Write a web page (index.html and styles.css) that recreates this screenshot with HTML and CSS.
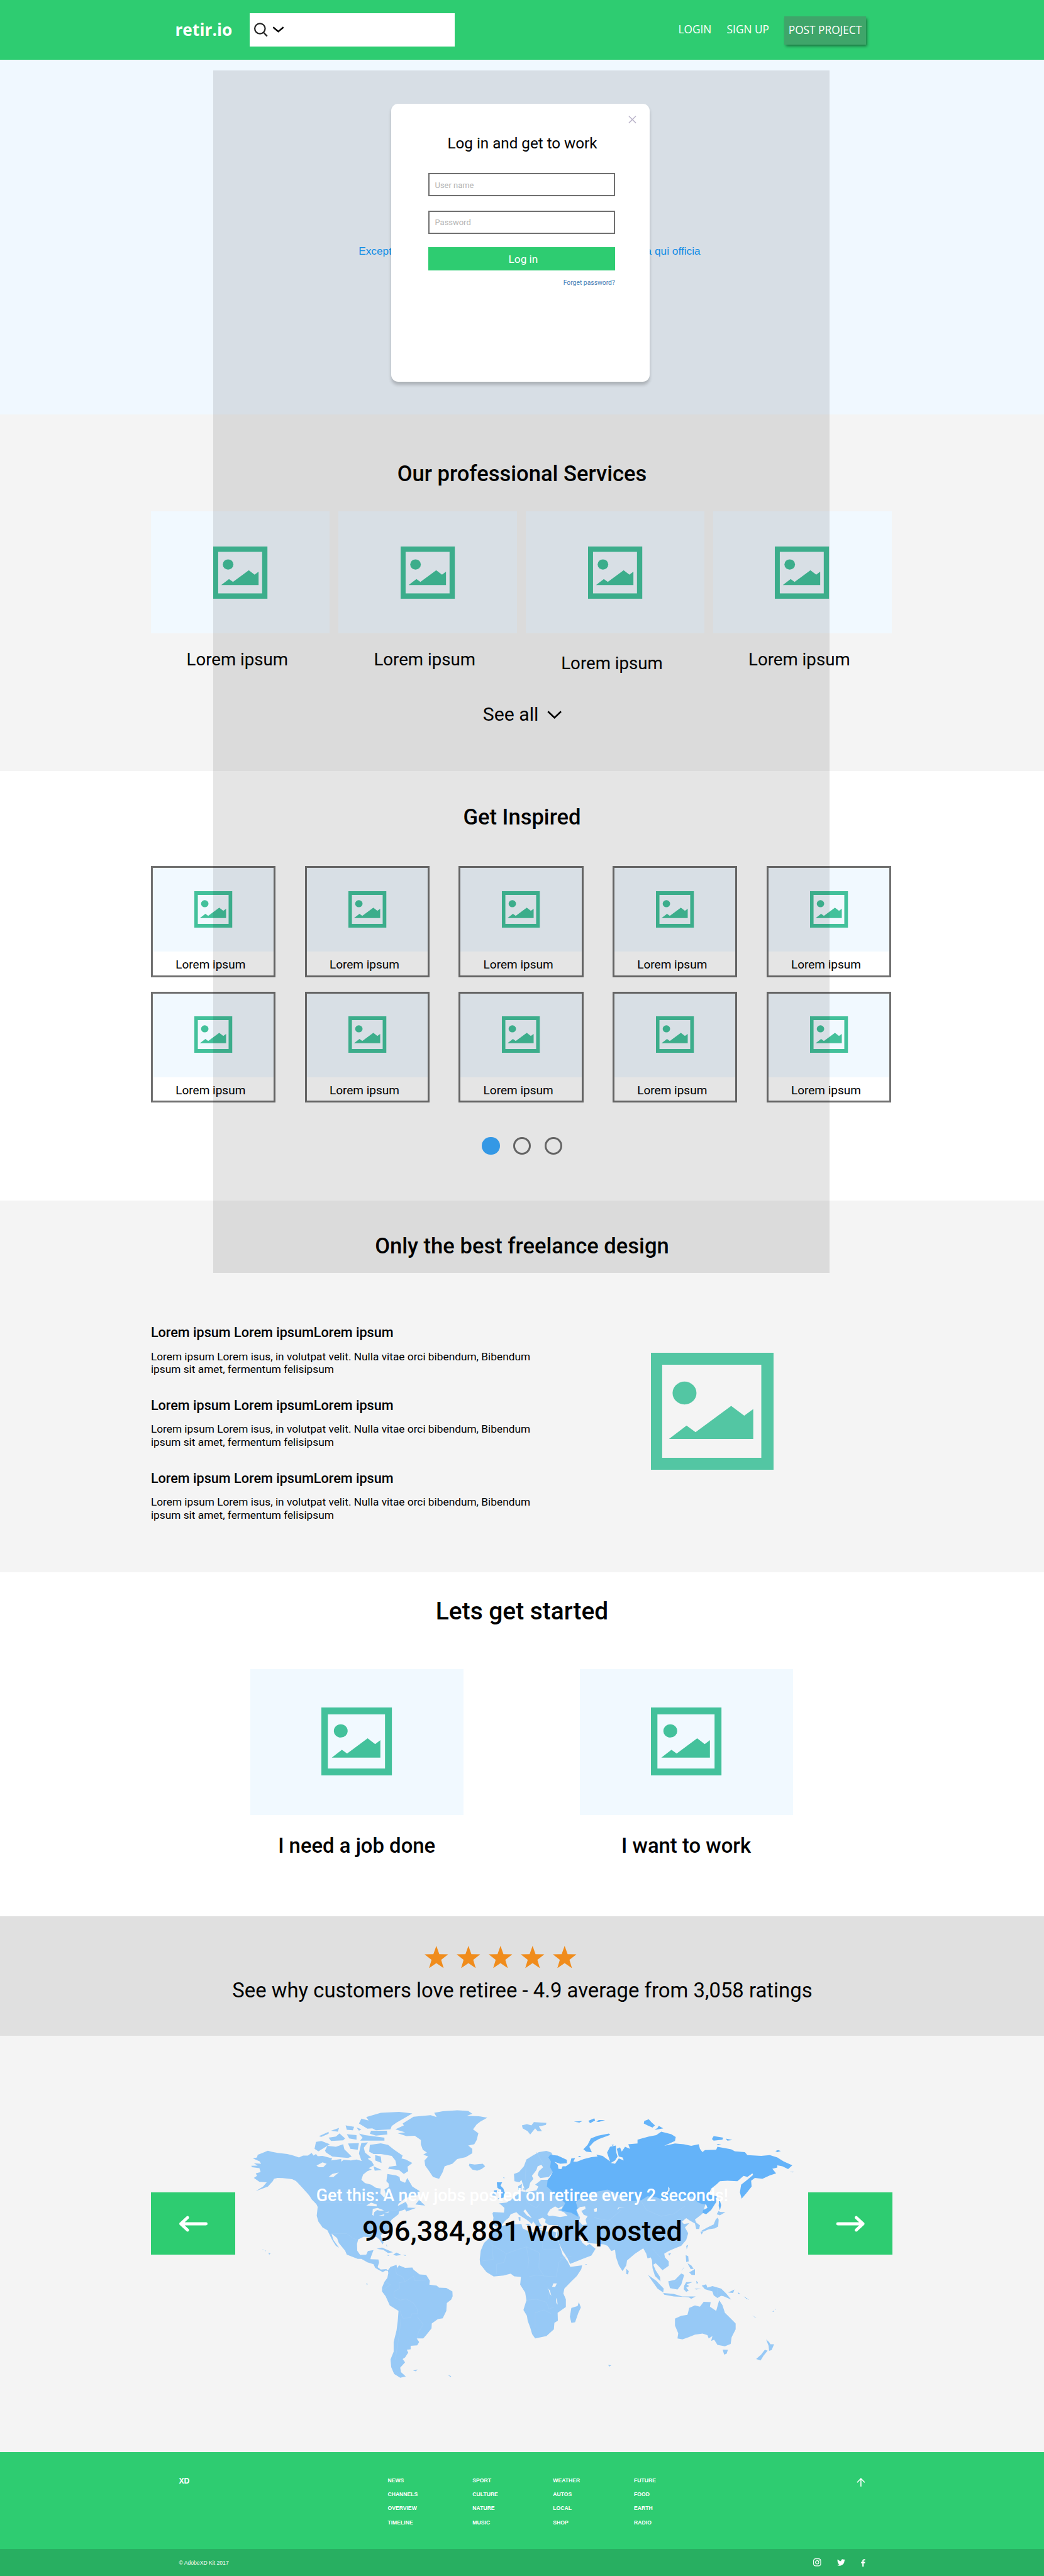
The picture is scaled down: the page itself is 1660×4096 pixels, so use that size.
FILE: index.html
```
<!DOCTYPE html>
<html lang="en">
<head>
<meta charset="utf-8">
<title>retir.io</title>
<link rel="stylesheet" href="styles.css">
</head>
<body>
<svg class="sprite" aria-hidden="true">
  <symbol id="picture" viewBox="0 0 225.5 215" preserveAspectRatio="none">
    <path fill-rule="evenodd" d="M0 0H225.500V215H0ZM20.700 22.100V193.200H203V22.100Z"/>
    <ellipse cx="61.800" cy="74" rx="22" ry="21"/>
    <path d="M33.200 158.500 65.500 134 82.100 145.900 147.600 97.600 171.600 115.800 188.200 103.600V158.500Z"/>
  </symbol>
  <symbol id="star" viewBox="0 0 43.500 41">
    <path d="M21.750 0 27.200 15.300 43.500 15.700 30.600 25.600 35.200 41 21.750 31.800 8.300 41 12.900 25.600 0 15.700 16.300 15.300Z"/>
  </symbol>
</svg>

<header class="topbar">
  <a class="logo">retir.io</a>
  <div class="search">
    <svg class="search-icon" viewBox="0 0 26 26"><circle cx="10.800" cy="11" r="9.500"/><path d="M17.300 18 24 25"/></svg>
    <svg class="search-caret" viewBox="0 0 22 12"><path d="M1.500 1.500 11 9.500 20.500 1.500"/></svg>
  </div>
  <nav class="topnav">
    <a>LOGIN</a>
    <a>SIGN UP</a>
    <a class="post">POST PROJECT</a>
  </nav>
</header>

<section class="hero">
  <p class="hero-text">Excepteur sint occaecat cupidatat non proident, sunt in culpa qui officia</p>
</section>

<section class="services">
  <h2 class="title">Our professional Services</h2>
  <div class="service-grid">
    <div class="service"><div class="service-pic"><svg class="pic"><use href="#picture"/></svg></div><p>Lorem ipsum</p></div>
    <div class="service"><div class="service-pic"><svg class="pic"><use href="#picture"/></svg></div><p>Lorem ipsum</p></div>
    <div class="service service-low"><div class="service-pic"><svg class="pic"><use href="#picture"/></svg></div><p>Lorem ipsum</p></div>
    <div class="service"><div class="service-pic"><svg class="pic"><use href="#picture"/></svg></div><p>Lorem ipsum</p></div>
  </div>
  <a class="see-all">See all <svg viewBox="0 0 27 15"><path d="M1.500 1.500 13.500 13 25.500 1.500"/></svg></a>
</section>

<section class="inspired">
  <h2 class="title">Get Inspired</h2>
  <div class="work-grid">
    <div class="work"><div class="work-pic"><svg class="pic"><use href="#picture"/></svg></div><p>Lorem ipsum</p></div>
    <div class="work"><div class="work-pic"><svg class="pic"><use href="#picture"/></svg></div><p>Lorem ipsum</p></div>
    <div class="work"><div class="work-pic"><svg class="pic"><use href="#picture"/></svg></div><p>Lorem ipsum</p></div>
    <div class="work"><div class="work-pic"><svg class="pic"><use href="#picture"/></svg></div><p>Lorem ipsum</p></div>
    <div class="work"><div class="work-pic"><svg class="pic"><use href="#picture"/></svg></div><p>Lorem ipsum</p></div>
    <div class="work"><div class="work-pic"><svg class="pic"><use href="#picture"/></svg></div><p>Lorem ipsum</p></div>
    <div class="work"><div class="work-pic"><svg class="pic"><use href="#picture"/></svg></div><p>Lorem ipsum</p></div>
    <div class="work"><div class="work-pic"><svg class="pic"><use href="#picture"/></svg></div><p>Lorem ipsum</p></div>
    <div class="work"><div class="work-pic"><svg class="pic"><use href="#picture"/></svg></div><p>Lorem ipsum</p></div>
    <div class="work"><div class="work-pic"><svg class="pic"><use href="#picture"/></svg></div><p>Lorem ipsum</p></div>
  </div>
  <div class="pager"><span class="dot dot-on"></span><span class="dot"></span><span class="dot"></span></div>
</section>

<section class="best">
  <h2 class="title">Only the best freelance design</h2>
  <div class="best-body">
    <div class="points">
      <article><h3>Lorem ipsum Lorem ipsumLorem ipsum</h3><p>Lorem ipsum Lorem isus, in volutpat velit. Nulla vitae orci bibendum, Bibendum<br>ipsum sit amet, fermentum felisipsum</p></article>
      <article><h3>Lorem ipsum Lorem ipsumLorem ipsum</h3><p>Lorem ipsum Lorem isus, in volutpat velit. Nulla vitae orci bibendum, Bibendum<br>ipsum sit amet, fermentum felisipsum</p></article>
      <article><h3>Lorem ipsum Lorem ipsumLorem ipsum</h3><p>Lorem ipsum Lorem isus, in volutpat velit. Nulla vitae orci bibendum, Bibendum<br>ipsum sit amet, fermentum felisipsum</p></article>
    </div>
    <svg class="pic best-pic"><use href="#picture"/></svg>
  </div>
</section>

<section class="started">
  <h2 class="title title-lg">Lets get started</h2>
  <div class="start-grid">
    <div class="start"><div class="start-pic"><svg class="pic"><use href="#picture"/></svg></div><p>I need a job done</p></div>
    <div class="start"><div class="start-pic"><svg class="pic"><use href="#picture"/></svg></div><p>I want to work</p></div>
  </div>
</section>

<section class="ratings">
  <div class="stars">
    <svg><use href="#star"/></svg><svg><use href="#star"/></svg><svg><use href="#star"/></svg><svg><use href="#star"/></svg><svg><use href="#star"/></svg>
  </div>
  <p>See why customers love retiree - 4.9 average from 3,058 ratings</p>
</section>

<section class="world">
  <a class="arrow-btn"><svg viewBox="0 0 54 30"><path d="M50.500 15H4M16.500 3.500 4 15 16.500 26.500"/></svg></a>
  <div class="map-stage">
    <svg class="map" viewBox="432 3744 1054 766">
      <g transform="translate(260 3850) scale(.44643 .35714)">
        <g class="land">
          <path d="M451 373 478 372 462 360 492 362 486 350 458 335 475 330 478 316 498 306 520 295 533 300 560 306 600 312 625 320 648 330 665 320 685 320 700 306 708 320 718 312 725 323 745 322 785 335 780 345 822 338 822 352 832 342 862 345 885 340 905 348 915 335 925 322 935 340 948 350 957 370 935 385 948 392 930 400 912 418 905 445 920 462 945 470 965 486 985 490 983 515 1000 538 1005 515 1000 495 1018 482 1018 465 1008 452 1012 415 1048 422 1062 430 1065 450 1085 460 1094 435 1115 480 1145 503 1135 525 1110 530 1085 540 1058 568 1055 580 1088 558 1095 575 1095 588 1130 590 1090 608 1085 597 1060 608 1058 622 1040 640 1030 650 1020 670 1022 700 1000 715 985 730 990 755 997 765 993 778 978 750 965 738 945 742 915 738 892 752 887 775 888 810 900 832 925 830 932 812 955 807 945 840 942 854 975 855 978 870 972 895 985 907 1008 905 1016 915 1005 912 993 920 975 908 962 898 955 880 930 870 905 852 890 852 845 830 838 810 812 770 805 745 782 722 790 755 813 795 800 785 785 755 765 705 745 690 728 660 721 630 725 585 720 570 700 545 688 520 668 490 650 460 620 442 580 436 560 435 545 440 540 452 520 480 470 503 500 480 515 458 485 455 462 435 475 425 470 412 490 405 485 385 455 380Z"/>
          <path d="M635 450 655 455 690 510 732 575 725 578 690 525 665 490Z"/>
          <path d="M1128 572 1145 545 1152 560 1168 578 1150 575Z"/>
          <path d="M925 122 985 100 1060 95 1115 103 1085 125 1050 150 1030 168 1025 185 965 190 950 180 930 182 895 155 905 130 935 140Z"/>
          <path d="M945 192 1010 192 1012 212 965 217 940 208ZM895 207 920 215 1000 228 1000 243 900 243 910 228ZM840 165 875 172 870 190 845 187ZM885 175 905 185 895 192ZM770 228 800 222 815 206 838 232 830 242 780 245ZM845 210 885 215 885 238 855 232ZM730 220 770 198 770 208 740 224ZM780 192 813 178 808 197Z"/>
          <path d="M718 250 740 245 775 262 745 285 728 298 712 285ZM755 295 765 270 800 275 830 262 835 288 865 325 850 332 810 328 785 325 760 305ZM850 258 895 256 890 290 860 285ZM905 255 932 252 915 280 920 305 945 330 905 345 895 310 900 280ZM962 318 985 325 988 358 962 345ZM955 375 990 395 960 398Z"/>
          <path d="M937 300 940 265 985 257 1015 265 1040 290 1075 320 1070 335 1088 340 1115 358 1095 378 1098 400 1080 415 1060 395 1015 388 1020 378 1050 372 1045 345 1030 322 985 312 955 312Z"/>
          <path d="M1045 185 1080 165 1075 155 1120 120 1190 112 1215 122 1205 100 1240 92 1300 87 1345 90 1362 105 1340 115 1390 118 1424 125 1395 145 1380 160 1365 185 1387 205 1380 240 1370 262 1345 268 1362 285 1362 308 1335 328 1300 338 1280 362 1248 375 1240 405 1225 440 1200 430 1185 402 1168 372 1165 345 1180 325 1160 315 1175 305 1158 290 1150 262 1150 240 1125 218 1090 220 1055 205 1085 200Z"/>
          <path d="M1348 372 1350 362 1372 366 1405 362 1415 375 1400 390 1382 398 1362 392Z"/>
          <path d="M968 800 990 794 1035 818 1015 822 995 805ZM1036 830 1050 820 1070 832 1048 836ZM1008 833 1020 833 1018 837ZM1076 832 1089 833 1086 837ZM522 820 531 825 525 830ZM498 802 502 804 499 806ZM508 808 513 810 510 813ZM925 977 931 982 928 988ZM1118 1428 1136 1421 1130 1431ZM1260 1449 1275 1456 1272 1460ZM1007 776 1012 788 1009 788Z"/>
          <path d="M1014 912 1025 893 1050 883 1052 900 1060 885 1085 898 1115 897 1120 908 1145 932 1172 935 1187 965 1185 985 1215 990 1225 1000 1255 1002 1280 1020 1281 1045 1275 1062 1257 1080 1255 1120 1240 1158 1220 1162 1195 1185 1194 1210 1175 1240 1160 1262 1133 1262 1143 1280 1135 1297 1108 1300 1108 1318 1092 1320 1098 1335 1085 1360 1075 1368 1085 1385 1065 1412 1068 1435 1088 1458 1065 1464 1040 1445 1028 1410 1025 1370 1038 1330 1038 1280 1050 1220 1055 1170 1058 1120 1022 1092 1005 1045 990 1020 990 1000 1000 970 1012 950 1016 925Z"/>
        </g>
        <path class="land-dark" d="M1463 458 1485 458 1478 475 1490 490 1495 510 1502 520 1495 535 1465 545 1482 525 1468 510 1475 495 1465 485ZM1450 500 1464 498 1462 510 1452 508ZM1490 432 1494 433 1492 440Z"/>
        <path class="land" d="M1450 508 1463 512 1460 525 1440 532Z"/>
        <path class="water" d="M925 578 945 562 968 572 968 582 945 580ZM952 595 972 590 998 602 985 605 970 600 958 612 955 630 950 625ZM975 630 1000 622 998 630ZM1000 612 1020 608 1015 614ZM720 372 745 355 762 362 748 380 730 380ZM770 430 785 415 812 407 790 430ZM1015 338 1028 335 1026 350 1014 348Z"/>
        <path class="border" d="M735 562H865L925 570M1018 605 1055 600 1062 580M780 722 845 722 870 745 887 755M1045 900 1050 930 1075 945 1085 970 1060 975 1062 1005 1040 1020 1040 1050 1065 1065 1090 1058 1120 1080 1135 1110 1138 1135 1112 1135 1108 1155 1075 1158 1065 1120M1068 1160 1060 1250 1045 1370M1135 1150 1160 1190 1140 1230 1135 1262M1085 970 1120 940 1125 965 1170 962M990 1015 1025 985 1003 970"/>
      </g>
      <g transform="translate(940 3850) scale(.45918 .35714)">
        <g class="land">
          <path d="M42 165 62 158 80 165 90 148 140 152 138 162 110 170 122 195 105 195 95 180 75 212 65 195 45 180Z"/>
          <path d="M10 415 30 405 50 375 60 340 85 320 110 302 140 296 160 305 170 330 160 350 158 380 165 405 150 430 115 436 105 420 110 400 127 380 120 368 105 375 100 395 82 425 88 440 75 460 70 485 55 500 45 465 40 445 32 458 12 452Z"/>
          <path d="M27 478 42 466 40 500 28 497ZM46 488 54 490 50 500Z"/>
          <path d="M-76 617-72 611-30 614-28 590-40 575-50 566-20 562-5 550 5 540 25 520 35 503 60 508 100 500 108 480 95 470 120 445 145 445 200 480 800 480 765 620 735 650 740 665 755 680 752 698 740 698 735 670 715 655 700 642 683 660 690 672 712 668 695 690 708 720 700 755 680 785 650 800 630 812 612 825 615 845 630 865 630 888 605 910 590 890 578 875 568 882 578 912 595 945 597 968 575 940 565 900 563 860 558 845 545 850 540 825 528 798 515 808 495 825 463 860 460 885 445 915 430 885 418 840 415 805 400 812 385 785 370 778 320 772 305 768 285 738 270 738 285 770 300 785 313 775 337 800 320 835 290 850 235 878 225 850 205 810 190 770 182 740 185 705 188 685 185 678 150 678 135 665 137 650 125 640 108 648 112 665 122 682 105 690 90 665 80 640 55 597 48 607 62 628 90 650 82 672 60 650 30 625 20 612-3 622-10 640-25 655-42 682-60 685-76 672-72 640Z"/>
          <path d="M28 637 36 637 36 655 30 656ZM32 618 36 618 35 630ZM55 672 73 672 70 683ZM110 695 126 697 112 699ZM160 692 172 688 166 696Z"/>
          <path d="M-60 692-52 687-20 676 15 674 40 672 45 695 60 705 90 716 100 698 140 712 165 710 180 715 176 740 190 770 205 830 225 865 236 893 283 885 280 905 262 940 240 968 212 1005 208 1030 218 1060 218 1100 185 1130 186 1170 172 1182 170 1215 140 1250 95 1262 83 1240 75 1205 65 1170 62 1145 48 1115 60 1065 55 1025 35 985 38 945 11 942-3 928-32 938-71 943-100 920-125 880-127 855-123 810-110 770-81 735-71 700Z"/>
          <path d="M270 1075 278 1102 268 1130 255 1178 240 1182 234 1150 240 1105 265 1095ZM460 903 470 915 467 932 460 930ZM295 879 303 880 299 883Z"/>
          <path d="M547 935 580 965 610 1005 608 1025 585 1005 560 960ZM608 1028 650 1033 690 1048 650 1046 612 1037ZM628 968 655 960 680 927 692 935 680 985 665 1010 635 1003ZM692 990 700 972 725 972 702 983 712 992 700 1000 710 1015 700 1022 690 1008ZM698 833 708 838 710 865 700 868ZM705 875 720 885 730 903 718 905ZM712 922 735 905 735 935 722 935ZM680 915 692 893 690 900ZM700 785 708 780 702 803ZM628 825 640 822 632 835ZM670 1046 738 1046 720 1058 710 1050ZM740 965 748 975 742 982ZM733 1005 760 1005 740 1010Z"/>
          <path d="M762 990 780 983 785 1000 805 992 840 1005 860 1030 880 1062 850 1045 840 1042 825 1054 810 1040 805 1020 775 1008ZM868 1025 893 1010 888 1028Z"/>
          <path d="M655 1160 680 1145 705 1140 712 1105 735 1092 755 1098 770 1073 798 1075 795 1098 820 1120 832 1065 845 1090 855 1130 875 1155 898 1185 898 1215 882 1255 878 1290 855 1302 825 1295 812 1268 800 1275 805 1250 790 1262 785 1245 765 1237 735 1242 710 1255 685 1267 665 1262 668 1235 655 1195ZM846 1319 867 1320 862 1340 852 1345Z"/>
          <path d="M1020 1267 1032 1280 1037 1292 1052 1292 1042 1322 1032 1326 1030 1300ZM1015 1320 1026 1325 1010 1350 998 1375 980 1368 1000 1345ZM965 1142 982 1158 975 1154ZM1045 1124 1051 1118 1050 1125ZM1054 1114 1060 1110 1058 1114ZM387 1398 400 1400 392 1407Z"/>
          <path d="M830 605 835 610 857 612 835 628 822 622ZM825 640 830 650 828 685 815 695 790 700 768 712 760 708 785 690 810 675 818 650ZM757 712 768 712 762 727Z"/>
          <path d="M1115 402 1132 404 1126 407Z"/>
        </g>
        <path class="land-dark" d="M145 445 155 430 165 405 155 380 158 350 148 330 155 316 185 320 222 342 222 360 195 362 172 352 186 368 188 388 200 390 205 375 218 375 235 360 240 335 255 333 248 352 262 352 290 338 320 328 345 325 340 315 365 322 395 350 383 305 395 275 418 268 420 305 425 325 415 345 398 358 415 362 430 335 450 345 445 330 430 325 422 285 435 278 442 300 455 275 475 285 468 262 505 258 505 238 550 222 580 215 600 197 640 210 658 225 655 245 612 270 655 258 690 262 720 270 750 262 755 285 765 302 775 292 820 290 825 275 880 288 895 298 935 302 945 318 1000 322 1035 318 1065 330 1090 350 1125 370 1108 390 1085 375 1065 370 1065 382 1045 388 1060 412 1035 422 1005 440 975 435 960 450 962 480 940 515 922 542 915 510 920 470 940 450 968 420 965 412 945 430 930 425 905 452 865 450 835 452 820 470 800 490 790 520 822 530 820 560 800 600 780 622 765 615 768 600 785 590 780 572 765 570 745 560 725 530 700 535 690 555 640 545 600 545 580 535 545 530 520 550 480 555 440 530 410 510 385 495 330 510 310 515 310 540 270 545 258 560 265 590 262 605 267 635 240 615 205 605 200 600 210 580 215 565 200 545 165 520 160 500 142 480Z"/>
        <path class="land-dark" d="M288 288 305 265 318 232 345 218 390 207 396 213 350 235 330 250 312 275 322 303 300 300ZM250 145 285 142 272 150ZM308 141 332 128 335 140 315 153ZM340 145 350 137 375 137 350 147ZM532 142 550 133 562 150 575 165 565 176 545 165 530 155ZM573 188 585 178 590 167 608 180ZM803 235 810 220 848 228 845 238 810 243ZM858 233 885 240 865 243ZM822 260 840 263 828 267ZM1057 297 1068 292 1079 297 1065 302ZM832 540 840 575 835 602 830 580ZM267 322 280 322 272 328ZM401 264 412 265 405 270ZM907 1024 917 1034 910 1032ZM930 1045 953 1064 940 1056Z"/>
        <path class="water" d="M143 622 155 598 175 582 188 592 205 580 203 592 185 600 210 612 225 630 195 637 165 630 150 632ZM260 600 275 585 295 582 297 595 280 605 290 625 305 632 297 650 302 675 285 678 270 658 275 640ZM330 595 342 590 342 608 333 610ZM423 600 428 588 455 584 432 590ZM612 525 632 492 634 498 615 530ZM168 978 182 978 175 997 163 995ZM148 1005 154 1015 160 1042 153 1030ZM178 1052 183 1065 185 1088 180 1080ZM628 480 634 490 628 500Z"/>
        <path class="border" d="M125 715V802H190M0 815 60 790 112 820V835M60 790 70 860 65 900M112 820 110 900 130 940 180 945M180 945 190 870 215 840M-80 735-78 780-20 825 0 815M-78 780-73 855-115 862M-20 825-30 870-60 880V930M70 945 100 935 130 940M60 1065 100 1060 140 1075 150 1110 170 1100M95 1210V1130L130 1115 160 1135M145 1000 150 1060M520 555 540 600 600 633 650 620 695 580M330 640 390 655 440 600M395 650 420 700 500 735 540 745M300 680 310 740 305 765M240 640 260 700 275 735M565 800 600 850M195 845 240 840M825 1002V1050M650 975 680 950M55 500 60 560 100 590M110 500 130 540 100 590M60 340 55 450M100 302 130 370"/>
      </g>
    </svg>
    <div class="map-copy">
      <p class="map-lead">Get this: A new jobs posted on retiree every 2 seconds!</p>
      <p class="map-count">996,384,881 work posted</p>
    </div>
  </div>
  <a class="arrow-btn"><svg viewBox="0 0 54 30"><path d="M3.500 15H50M37.500 3.500 50 15 37.500 26.500"/></svg></a>
</section>

<footer class="footer">
  <div class="footer-main">
    <span class="brand">XD</span>
    <ul class="links"><li>NEWS</li><li>CHANNELS</li><li>OVERVIEW</li><li>TIMELINE</li></ul>
    <ul class="links"><li>SPORT</li><li>CULTURE</li><li>NATURE</li><li>MUSIC</li></ul>
    <ul class="links"><li>WEATHER</li><li>AUTOS</li><li>LOCAL</li><li>SHOP</li></ul>
    <ul class="links"><li>FUTURE</li><li>FOOD</li><li>EARTH</li><li>RADIO</li></ul>
    <svg class="to-top" viewBox="0 0 16 16"><path d="M8 16V1.500M1 8.300 8 1.200 15 8.300"/></svg>
  </div>
  <div class="footer-bar">
    <span>© AdobeXD Kit 2017</span>
    <div class="social">
      <svg class="insta" viewBox="0 0 14.500 14.500"><rect x=".7" y=".7" width="13.100" height="13.100" rx="3.600"/><circle cx="7.250" cy="7.250" r="3.100"/><circle class="lens" cx="11" cy="3.500" r=".9"/></svg>
      <svg class="tweet" viewBox="0 48 512 416"><path d="M459.370 151.716c.325 4.548.325 9.097.325 13.645 0 138.720-105.583 298.558-298.558 298.558-59.452 0-114.680-17.219-161.137-47.106 8.447.974 16.568 1.299 25.340 1.299 49.055 0 94.213-16.568 130.274-44.832-46.132-.975-84.792-31.188-98.112-72.772 6.498.974 12.995 1.624 19.818 1.624 9.421 0 18.843-1.300 27.614-3.573-48.081-9.747-84.143-51.980-84.143-102.985v-1.299c13.969 7.797 30.214 12.670 47.431 13.319-28.264-18.843-46.781-51.005-46.781-87.391 0-19.492 5.197-37.360 14.294-52.954 51.655 63.675 129.300 105.258 216.365 109.807-1.624-7.797-2.599-15.918-2.599-24.040 0-57.828 46.782-104.934 104.934-104.934 30.213 0 57.502 12.670 76.670 33.137 23.715-4.548 46.456-13.320 66.599-25.340-7.798 24.366-24.366 44.833-46.132 57.827 21.117-2.273 41.584-8.122 60.426-16.243-14.292 20.791-32.161 39.308-52.628 54.253z"/></svg>
      <svg class="fb" viewBox="0 0 8 14"><path d="M5 14V7.700H7.300L7.600 5.300H5V3.800C5 3.100 5.200 2.600 6.200 2.600H7.700V.4C7.300.3 6.600.2 5.800.2 3.800.2 2.500 1.400 2.500 3.500V5.300H.2V7.700H2.500V14Z"/></svg>
    </div>
  </div>
</footer>

<div class="scrim"></div>
<div class="modal">
  <svg class="close" viewBox="0 0 15 14"><path d="M1 .5 14 13.500M14 .5 1 13.500"/></svg>
  <h1>Log in and get to work</h1>
  <div class="field field-user">User name</div>
  <div class="field">Password</div>
  <a class="submit">Log in</a>
  <a class="forgot">Forget password?</a>
</div>
</body>
</html>
```
FILE: styles.css
```
/* 1rem is ten design pixels on a 1920-wide artboard */
html { font-size: calc(100vw / 192); }
* { box-sizing: border-box; margin: 0; padding: 0; }
body { position: relative; background: #fff; color: #000; font-family: "Roboto", sans-serif; overflow-x: hidden; }
svg { display: block; overflow: visible; }
ul { list-style: none; }
.sprite { position: absolute; width: 0; height: 0; }

.title { text-align: center; font-size: 4rem; font-weight: 500; line-height: 4.8rem; }
.title-lg { font-size: 4.5rem; line-height: 5.4rem; }
.pic { fill: #43c19b; }

/* top bar */
.topbar { display: flex; align-items: center; height: 11rem; padding: 0 32.75rem 0 32.2rem; background: #2ecc71; color: #fff; font-family: "Open Sans", sans-serif; }
.logo { width: 13.7rem; font-size: 3.05rem; font-weight: 700; line-height: 4rem; }
.search { display: flex; gap: .8rem; align-items: center; width: 37.7rem; height: 6.1rem; padding-left: .8rem; background: #fff; }
.search svg { fill: none; stroke: #222; stroke-width: 2.6; }
.search-icon { width: 2.6rem; height: 2.6rem; }
.search .search-caret { width: 2.2rem; height: 1.2rem; stroke: #000; stroke-width: 2.8; }
.topnav { display: flex; align-items: center; gap: 2.8rem; margin-left: auto; font-size: 2rem; line-height: 2.8rem; white-space: nowrap; }
.post { width: 15rem; height: 5.2rem; margin-top: .2rem; text-align: center; line-height: 5.2rem; background: #3fa56a; box-shadow: .2rem .4rem .5rem rgba(0, 0, 0, .45); }

/* hero */
.hero { height: 65.2rem; padding: 34rem 0 0 65.95rem; background: #f0f8ff; }
.hero-text { font: 2rem/2.4rem "Liberation Sans", sans-serif; color: #149cff; white-space: nowrap; }

/* services */
.services { height: 65.6rem; padding-top: 8.6rem; background: #f4f4f4; }
.service-grid { display: grid; grid-template-columns: repeat(4, 32.85rem); gap: 1.6rem; margin: 4.4rem 0 0 27.8rem; }
.service-pic { height: 22.5rem; padding: 6.5rem 0 0 11.4rem; background: #f1f9ff; }
.service .pic { width: 10rem; height: 9.6rem; }
.service p { margin-top: 2.98rem; padding-left: 6.5rem; font-size: 3.2rem; line-height: 3.8rem; }
.service-low p { margin: 3.68rem 0 -.7rem; }
.see-all { display: flex; gap: 1.6rem; margin: 6.07rem 0 0 88.8rem; font-size: 3.5rem; line-height: 4.2rem; }
.see-all svg { width: 2.7rem; height: 1.5rem; margin-top: 1.3rem; fill: none; stroke: #000; stroke-width: 3; }

/* inspired */
.inspired { height: 79rem; padding-top: 6.15rem; background: #fff; }
.work-grid { display: grid; grid-template-columns: repeat(5, 22.95rem); gap: 2.7rem 5.35rem; margin: 6.55rem 0 0 27.75rem; }
.work { height: 20.4rem; border: .35rem solid #707070; }
.work-pic { height: 15.35rem; padding: 4.2rem 0 0 7.65rem; background: #f1f9ff; }
.work .pic { width: 7rem; height: 6.7rem; }
.work p { margin-top: 1.2rem; padding-left: 4.2rem; font-size: 2.2rem; line-height: 2.6rem; }
.pager { display: flex; gap: 2.5rem; margin: 6.3rem 0 0 88.65rem; }
.dot { width: 3.25rem; height: 3.25rem; border: .4rem solid #707070; border-radius: 50%; }
.dot-on { border: 0; background: #3aaaff; }

/* best */
.best { height: 68.4rem; padding-top: 5.98rem; background: #f4f4f4; }
.best-body { display: flex; align-items: flex-start; margin: 12rem 0 0 27.75rem; }
.points { display: flex; flex-direction: column; gap: 3.9rem; width: 91.95rem; }
.points h3 { font-size: 2.5rem; font-weight: 500; line-height: 3rem; }
.points p { margin-top: 1.7rem; font-size: 2rem; line-height: 2.4rem; }
.best-pic { width: 22.55rem; height: 21.5rem; margin-top: 5.22rem; fill: #53c6a3; }

/* started */
.started { height: 63.2rem; padding-top: 4.5rem; background: #fff; }
.start-grid { display: grid; grid-template-columns: repeat(2, 39.2rem); gap: 21.4rem; margin: 7.9rem 0 0 46rem; }
.start-pic { height: 26.8rem; padding: 7.08rem 0 0 13.07rem; background: #f1f9ff; }
.start .pic { width: 13rem; height: 12.5rem; }
.start p { margin-top: 3.5rem; text-align: center; font-size: 3.8rem; font-weight: 500; line-height: 4.6rem; }

/* ratings */
.ratings { height: 22rem; padding-top: 5.5rem; background: #e0e0e0; }
.stars { display: flex; gap: 1.55rem; margin-left: 78.05rem; }
.stars svg { width: 4.35rem; height: 4.1rem; fill: #f08c1c; }
.ratings p { margin-top: 1.85rem; padding-left: .1rem; text-align: center; font-size: 3.8rem; line-height: 4.6rem; }

/* world map */
.world { display: grid; grid-template-columns: 15.5rem 105.4rem 15.5rem; height: 76.6rem; padding-left: 27.75rem; background: #f4f4f4; }
.arrow-btn { display: flex; align-items: center; justify-content: center; height: 11.5rem; margin-top: 28.8rem; background: #2ecc71; }
.arrow-btn svg { width: 5.4rem; height: 3rem; fill: none; stroke: #fff; stroke-width: 5.6; stroke-linecap: round; stroke-linejoin: round; }
.map-stage { position: relative; }
.map { width: 105.4rem; height: 76.6rem; }
.land { fill: #97c9f6; }
.land-dark { fill: #64b3f9; }
.water { fill: #f4f4f4; }
.border { fill: none; stroke: #a6d0f6; stroke-width: 1.4; }
.map-copy { position: absolute; top: 27.55rem; left: .1rem; width: 100%; text-align: center; font-weight: 500; white-space: nowrap; }
.map-lead { color: #fff; font-size: 3.1rem; line-height: 3.8rem; }
.map-count { margin-top: 1.56rem; font-size: 5.2rem; line-height: 6.2rem; }

/* footer */
.footer { color: #fff; font-family: "Liberation Sans", sans-serif; font-size: 1rem; }
.footer-main { display: grid; grid-template-columns: 38.4rem 15.6rem 14.8rem 14.9rem 1fr 1.6rem; height: 17.8rem; padding: 3.85rem 32.9rem 0; background: #2ecc71; }
.brand { font-size: 1.42rem; font-weight: 700; line-height: 2.85rem; }
.links { font-weight: 700; line-height: 2.6rem; }
.to-top { grid-column: 6; width: 1.6rem; height: 1.6rem; margin-top: .85rem; fill: none; stroke: #fff; stroke-width: 1.8; }
.footer-bar { display: flex; align-items: center; justify-content: space-between; height: 5rem; padding: 0 32.9rem; background: #28af61; }
.social { display: flex; align-items: center; gap: 2.9rem; }
.social svg { fill: #fff; }
.social .insta { width: 1.45rem; height: 1.45rem; fill: none; stroke: #fff; stroke-width: 1.3; }
.insta .lens { fill: #fff; stroke: none; }
.tweet { width: 1.5rem; height: 1.25rem; }
.fb { width: .8rem; height: 1.4rem; }

/* login dialog */
.scrim { position: absolute; top: 13rem; left: 39.2rem; width: 113.4rem; height: 221.1rem; background: rgba(0, 0, 0, .1); }
.modal { position: absolute; top: 19.1rem; left: 71.9rem; width: 47.6rem; height: 51.1rem; padding: 2.2rem 6.4rem 0 6.85rem; border-radius: 1.3rem; background: #fff; box-shadow: 0 .5rem .6rem rgba(0, 0, 0, .2); }
.close { width: 1.5rem; height: 1.4rem; margin: 0 -4rem 0 auto; fill: none; stroke: #bdb7cc; stroke-width: 1.8; }
.modal h1 { margin: 2.1rem 0 3.6rem 3.55rem; font-size: 2.8rem; font-weight: 400; line-height: 3.4rem; white-space: nowrap; }
.field { height: 4.3rem; margin-bottom: 2.6rem; padding-left: 1rem; border: .24rem solid #707070; color: #b3b3b3; font-size: 1.5rem; line-height: 3.85rem; }
.field-user { line-height: 4.2rem; }
.submit { display: block; height: 4.3rem; margin-top: -.1rem; background: #2ecc71; color: #fff; text-align: center; font-size: 2rem; line-height: 4.5rem; padding-left: .6rem; }
.forgot { display: block; margin-top: 1.44rem; color: #4880b4; text-align: right; font-size: 1.2rem; line-height: 1.6rem; }
```
